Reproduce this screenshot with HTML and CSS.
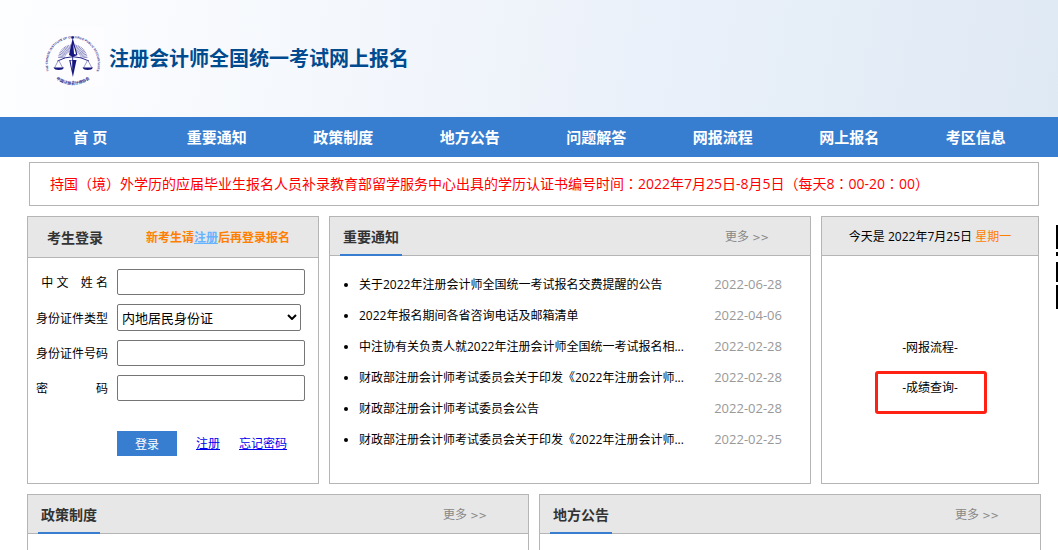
FILE: index.html
```html
<!DOCTYPE html>
<html lang="zh-CN">
<head>
<meta charset="utf-8">
<meta name="viewport" content="width=device-width, initial-scale=1">
<title>注册会计师全国统一考试网上报名</title>
<link rel="stylesheet" href="styles.css">
</head>
<body>
<header class="banner">
  <svg class="logo" viewBox="0 0 60 60" role="img" aria-label="中国注册会计师协会">
    <defs>
      <path id="ring-top" d="M5 44 A25 25 0 1 1 52.500 44"/>
      <path id="ring-bottom" d="M9.500 49.500 A27 27 0 0 0 48.500 49.500"/>
    </defs>
    <rect width="60" height="60" fill="#fdfdff"/>
    <g class="logo-ring">
      <text font-size="3"><textPath href="#ring-top" startOffset="50%" text-anchor="middle">THE CHINESE INSTITUTE OF CERTIFIED PUBLIC ACCOUNTANTS</textPath></text>
      <text font-size="4"><textPath href="#ring-bottom" startOffset="50%" text-anchor="middle">中国注册会计师协会</textPath></text>
    </g>
    <path d="M17.500 31 A11.300 11.300 0 0 1 40 31" fill="none" stroke="#8080bd" stroke-width="7" stroke-dasharray="0.700 0.600"/>
    <path d="M13.500 34 Q28.700 25.500 45 34 M28.700 29 V33" fill="none" stroke="#2b2b8c" stroke-width="1"/>
    <path d="M14.500 33 L10.500 41 M14.500 33 L18.800 41 M43.700 33 L39.500 41 M43.700 33 L48 41" stroke="#5555a5" stroke-width="0.600"/>
    <path d="M9.500 40.500 H20 Q19 43 14.800 43 Q10.500 43 9.500 40.500 Z M38.500 40.500 H49 Q48 43 43.700 43 Q39.500 43 38.500 40.500 Z" fill="#17177f"/>
    <path d="M28.700 11 L25 28 L28.700 30 L33.500 28 Z" fill="#17177f"/>
    <path d="M29.300 17 L30 27 L32.200 27.500 Z" fill="#fff"/>
    <path d="M25.200 33 H32.500 L28.900 50 Z" fill="#17177f"/>
    <path d="M26.500 33.500 H28.200 V43 Z" fill="#fff"/>
    <circle cx="28.700" cy="10.500" r="1.300" fill="#17177f"/>
  </svg>
  <h1 class="site-title">注册会计师全国统一考试网上报名</h1>
</header>

<nav class="nav">
  <ul class="nav-list">
    <li><a href="#">首 页</a></li>
    <li><a href="#">重要通知</a></li>
    <li><a href="#">政策制度</a></li>
    <li><a href="#">地方公告</a></li>
    <li><a href="#">问题解答</a></li>
    <li><a href="#">网报流程</a></li>
    <li><a href="#">网上报名</a></li>
    <li><a href="#">考区信息</a></li>
  </ul>
</nav>

<main class="page">
  <p class="notice">持国（境）外学历的应届毕业生报名人员补录教育部留学服务中心出具的学历认证书编号时间<span class="punct" lang="zh-TW">：</span>2022年7月25日-8月5日（每天8<span class="punct" lang="zh-TW">：</span>00-20<span class="punct" lang="zh-TW">：</span>00）</p>

  <div class="row row-main">
    <section class="panel">
      <div class="panel-head login-head">
        <h2>考生登录</h2>
        <p class="prompt">新考生请<a href="#">注册</a>后再登录报名</p>
      </div>
      <form class="login-form">
        <div class="field">
          <label for="name">中 文 &nbsp;&nbsp; 姓 名</label>
          <input id="name" type="text">
        </div>
        <div class="field">
          <label for="id-type">身份证件类型</label>
          <div class="select-wrap">
            <select id="id-type"><option>内地居民身份证</option></select>
            <svg class="chevron" viewBox="0 0 10 6" aria-hidden="true"><path d="M1 1 L5 5 L9 1"/></svg>
          </div>
        </div>
        <div class="field">
          <label for="id-number">身份证件号码</label>
          <input id="id-number" type="text">
        </div>
        <div class="field">
          <label for="password">密　　　　码</label>
          <input id="password" type="password">
        </div>
        <div class="actions">
          <button type="button">登录</button>
          <a href="#">注册</a>
          <a href="#">忘记密码</a>
        </div>
      </form>
    </section>

    <section class="panel">
      <div class="panel-head">
        <h2 class="tab">重要通知</h2>
        <a class="more" href="#">更多 <span class="arrows">&gt;&gt;</span></a>
      </div>
      <ul class="news">
        <li><div class="news-item"><a href="#">关于2022年注册会计师全国统一考试报名交费提醒的公告</a><time>2022-06-28</time></div></li>
        <li><div class="news-item"><a href="#">2022年报名期间各省咨询电话及邮箱清单</a><time>2022-04-06</time></div></li>
        <li><div class="news-item"><a href="#">中注协有关负责人就2022年注册会计师全国统一考试报名相...</a><time>2022-02-28</time></div></li>
        <li><div class="news-item"><a href="#">财政部注册会计师考试委员会关于印发《2022年注册会计师...</a><time>2022-02-28</time></div></li>
        <li><div class="news-item"><a href="#">财政部注册会计师考试委员会公告</a><time>2022-02-28</time></div></li>
        <li><div class="news-item"><a href="#">财政部注册会计师考试委员会关于印发《2022年注册会计师...</a><time>2022-02-25</time></div></li>
      </ul>
    </section>

    <section class="panel">
      <div class="panel-head today">
        <p>今天是 2022年7月25日 <span class="weekday">星期一</span></p>
      </div>
      <ul class="quick-links">
        <li><a href="#">-网报流程-</a></li>
        <li><a class="marked" href="#">-成绩查询-</a></li>
      </ul>
    </section>
  </div>

  <div class="row row-lower">
    <section class="panel">
      <div class="panel-head">
        <h2 class="tab">政策制度</h2>
        <a class="more" href="#">更多 <span class="arrows">&gt;&gt;</span></a>
      </div>
    </section>
    <section class="panel">
      <div class="panel-head">
        <h2 class="tab">地方公告</h2>
        <a class="more" href="#">更多 <span class="arrows">&gt;&gt;</span></a>
      </div>
    </section>
  </div>
</main>

<svg class="side-code" viewBox="0 0 2 84" aria-hidden="true">
  <path d="M0 0h2v24H0z M0 27h2v4H0z M0 37h2v20H0z M0 60h2v24H0z"/>
</svg>
</body>
</html>
```

FILE: styles.css
```css
* {
  box-sizing: border-box;
}

html {
  overflow: hidden;
}

body {
  margin: 0;
  background: #fff;
  color: #000;
  font-family: "Open Sans", "Noto Sans CJK SC", sans-serif;
  font-size: 12px;
  line-height: 18px;
}

h1, h2, p, ul {
  margin: 0;
  padding: 0;
}

a {
  color: inherit;
  text-decoration: none;
}

/* Banner */
.banner {
  display: flex;
  align-items: center;
  gap: 5px;
  padding: 27px 44px 30px;
  background: linear-gradient(100deg, #fdfeff 0%, #f1f5fb 42%, #e9f0f9 65%, #dfe9f4 100%);
}

.logo {
  width: 60px;
  height: 60px;
}

.logo-ring {
  fill: #2b2b8c;
  font-family: "Liberation Sans", "Noto Sans CJK SC", sans-serif;
  font-weight: bold;
}

.site-title {
  padding-top: 4px;
  color: #004b8f;
  font-size: 20px;
  line-height: 30px;
}

/* Navigation */
.nav {
  padding: 0 19px 0 27px;
  background: #377dd0;
}

.nav-list {
  display: grid;
  grid-template-columns: repeat(8, 1fr);
  list-style: none;
}

.nav-list a {
  display: block;
  color: #fff;
  font-size: 15px;
  font-weight: bold;
  line-height: 40px;
  text-align: center;
}

/* Page frame */
.page {
  padding: 5px 17px 0 27px;
}

.notice {
  margin: 0 2px 10px;
  padding: 0 20px;
  border: 1px solid #b5b5b5;
  color: #f00;
  font-size: 14px;
  line-height: 42px;
}

.punct {
  font-family: "Noto Sans CJK TC", sans-serif;
  line-height: 20px;
}

.row {
  display: grid;
  gap: 10px;
}

.row-main {
  grid-template-columns: 292fr 482fr 218fr;
  margin-bottom: 10px;
  padding-right: 2px;
}

.row-lower {
  grid-template-columns: 1fr 1fr;
}

.row-lower .panel {
  min-height: 80px;
}

/* Panels */
.panel {
  display: flex;
  flex-direction: column;
  min-width: 0;
  border: 1px solid #b5b5b5;
}

.panel-head {
  display: flex;
  justify-content: space-between;
  height: 39px;
  padding: 0 41px 0 10px;
  border-bottom: 1px solid #b5b5b5;
  background: #e7e7e7;
  line-height: 40px;
}

.panel-head h2 {
  color: #333;
  font-size: 14px;
}

.tab {
  height: 39px;
  padding: 0 3px;
  border-bottom: 2px solid #377dd0;
}

.more {
  color: #888;
}

.arrows {
  font-family: "DejaVu Sans", sans-serif;
  font-size: 10px;
}

/* Login */
.login-head {
  height: 41px;
  padding: 0 28px 0 19px;
  line-height: 41px;
}

.prompt {
  color: #ff8000;
  font-weight: bold;
}

.prompt a {
  color: #66b3ff;
  text-decoration: underline;
}

.login-form {
  display: flex;
  flex-direction: column;
  gap: 9px;
  padding: 11px 13px 27px 8px;
}

.field {
  display: grid;
  grid-template-columns: 72px 1fr;
  align-items: center;
  gap: 9px;
}

.field label {
  padding-top: 2px;
  text-align: right;
  white-space: nowrap;
}

.field input,
.field select {
  width: 100%;
  height: 26px;
  margin: 0;
  border: 1px solid #767676;
  border-radius: 2px;
  background: #fff;
  color: #000;
  font-family: inherit;
  font-size: 13px;
}

.select-wrap {
  position: relative;
  margin-right: 4px;
}

.field select {
  display: block;
  height: 27px;
  padding: 0 20px 0 4px;
  appearance: none;
}

.chevron {
  position: absolute;
  top: 10px;
  right: 4px;
  width: 10px;
  height: 6px;
  fill: none;
  stroke: #000;
  stroke-width: 2;
  pointer-events: none;
}

.actions {
  display: flex;
  align-items: center;
  gap: 19px;
  padding: 21px 0 0 81px;
}

.actions button {
  width: 60px;
  height: 25px;
  padding: 0;
  border: 0;
  background: #377dd0;
  color: #fff;
  font-family: inherit;
  font-size: 12px;
}

.actions a {
  color: #00e;
  text-decoration: underline;
}

/* News */
.news {
  padding: 13px 28px 0 29px;
  list-style: disc;
}

.news li {
  line-height: 31px;
}

.news-item {
  display: flex;
  justify-content: space-between;
  gap: 10px;
}

.news-item a {
  overflow: hidden;
  text-overflow: ellipsis;
  white-space: nowrap;
}

.news time {
  flex: none;
  color: #999;
  font-size: 13px;
}

/* Today and quick links */
.today {
  justify-content: center;
  padding: 0;
}

.weekday {
  color: #ff8000;
}

.quick-links {
  display: flex;
  flex: 1;
  flex-direction: column;
  align-items: center;
  justify-content: center;
  padding-bottom: 4px;
  list-style: none;
  line-height: 40px;
}

.marked {
  display: block;
  position: relative;
}

.marked::after {
  content: "";
  position: absolute;
  inset: 3px -29px -6px -27px;
  border: 3px solid #ff2113;
  border-radius: 3px;
}

/* Code strip at the window's edge */
.side-code {
  position: fixed;
  top: 225px;
  right: 0;
  width: 2px;
  height: 84px;
}
```
